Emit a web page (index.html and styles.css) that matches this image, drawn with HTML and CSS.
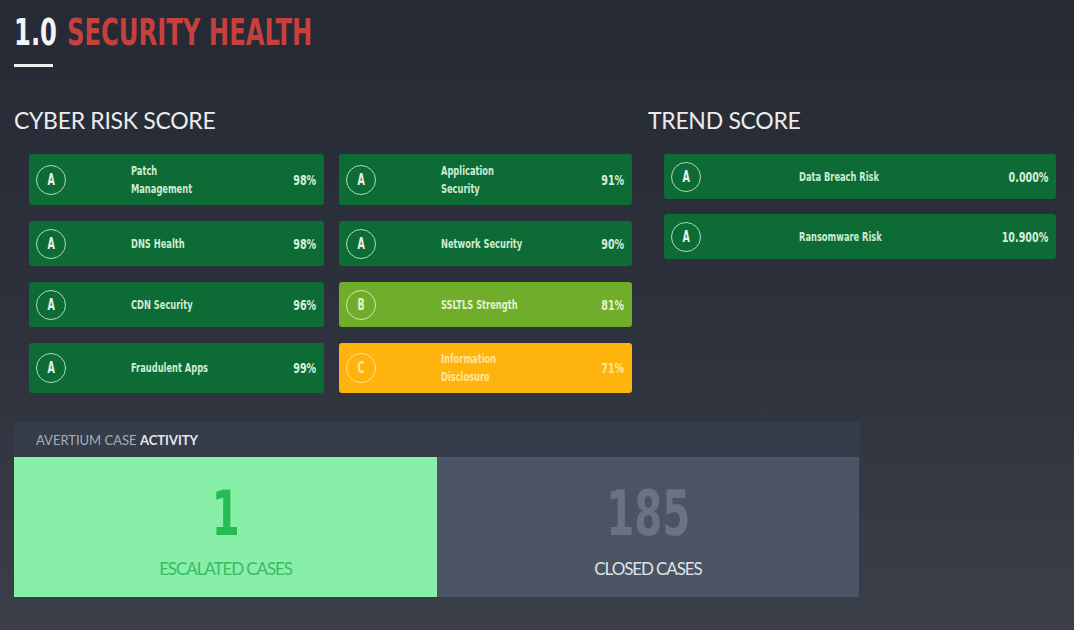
FILE: index.html
```html
<!DOCTYPE html>
<html>
<head>
<meta charset="utf-8">
<link rel="stylesheet" href="styles.css">
</head>
<body>
<div class="page">
  <h1 class="title"><span class="num">1.0</span><span class="name">SECURITY HEALTH</span></h1>
  <div class="rule"></div>

  <div class="scores">
    <section class="cyber">
      <h2 class="section-head">CYBER RISK SCORE</h2>
      <div class="cards two-col">
        <div class="card green tall"><span class="badge"><i>A</i></span><span class="label"><i>Patch<br>Management</i></span><span class="value"><i>98%</i></span></div>
        <div class="card green tall"><span class="badge"><i>A</i></span><span class="label"><i>Application<br>Security</i></span><span class="value"><i>91%</i></span></div>
        <div class="card green"><span class="badge"><i>A</i></span><span class="label"><i>DNS Health</i></span><span class="value"><i>98%</i></span></div>
        <div class="card green"><span class="badge"><i>A</i></span><span class="label"><i>Network Security</i></span><span class="value"><i>90%</i></span></div>
        <div class="card green"><span class="badge"><i>A</i></span><span class="label"><i>CDN Security</i></span><span class="value"><i>96%</i></span></div>
        <div class="card lime"><span class="badge"><i>B</i></span><span class="label"><i>SSLTLS Strength</i></span><span class="value"><i>81%</i></span></div>
        <div class="card green tall"><span class="badge"><i>A</i></span><span class="label"><i>Fraudulent Apps</i></span><span class="value"><i>99%</i></span></div>
        <div class="card amber tall"><span class="badge"><i>C</i></span><span class="label"><i>Information<br>Disclosure</i></span><span class="value"><i>71%</i></span></div>
      </div>
    </section>
    <section class="trend">
      <h2 class="section-head">TREND SCORE</h2>
      <div class="cards one-col">
        <div class="card green"><span class="badge"><i>A</i></span><span class="label"><i>Data Breach Risk</i></span><span class="value"><i>0.000%</i></span></div>
        <div class="card green"><span class="badge"><i>A</i></span><span class="label"><i>Ransomware Risk</i></span><span class="value"><i>10.900%</i></span></div>
      </div>
    </section>
  </div>

  <div class="activity">
    <div class="activity-head"><span class="muted">AVERTIUM CASE</span> <strong>ACTIVITY</strong></div>
    <div class="panels">
      <div class="panel escalated"><div class="big">1</div><div class="caption">ESCALATED CASES</div></div>
      <div class="panel closed"><div class="big">185</div><div class="caption">CLOSED CASES</div></div>
    </div>
  </div>
</div>
</body>
</html>
```

FILE: styles.css
```css
html, body {
  margin: 0;
  padding: 0;
}
body {
  width: 1074px;
  height: 630px;
  overflow: hidden;
  background: linear-gradient(180deg, #252a35 0%, #2d313c 50%, #3b3f49 100%);
  font-family: "Lato", "Liberation Sans", sans-serif;
}
.page {
  padding: 13px 0 0 14px;
}
.title {
  margin: 0;
  font-family: "DejaVu Sans Condensed", "DejaVu Sans", sans-serif;
  font-weight: 700;
  font-size: 38px;
  line-height: 38px;
  height: 38px;
  white-space: nowrap;
  transform: scaleX(0.71);
  transform-origin: left center;
}
.title .num {
  color: #f4f4f4;
  margin-right: 14px;
}
.title .name {
  color: #c6403e;
}
.rule {
  margin-top: 13px;
  width: 39px;
  height: 3px;
  background: #f0f0f0;
}
.scores {
  display: flex;
  gap: 16px;
  margin-top: 41px;
}
.cyber {
  width: 618px;
}
.trend {
  width: 408px;
}
.section-head {
  margin: 0;
  font-family: "Lato", sans-serif;
  font-weight: 400;
  font-size: 23px;
  line-height: 24px;
  color: #ececec;
  letter-spacing: -0.3px;
}
.cards {
  display: grid;
  margin-top: 22px;
}
.two-col {
  grid-template-columns: 295px 293px;
  column-gap: 15px;
  row-gap: 16px;
  padding-left: 15px;
}
.one-col {
  grid-template-columns: 392px;
  row-gap: 15px;
  padding-left: 16px;
}
.card {
  display: grid;
  grid-template-columns: 34% 1fr auto;
  align-items: center;
  height: 45px;
  padding: 0 8px 0 7px;
  border-radius: 3px;
  font-family: "DejaVu Sans Condensed", "DejaVu Sans", sans-serif;
  box-sizing: border-box;
}
.card i {
  font-style: normal;
  display: inline-block;
  white-space: nowrap;
}
.card.tall {
  height: 51px;
}
.two-col .card:nth-child(7),
.two-col .card:nth-child(8) {
  height: 50px;
}
.badge {
  width: 30px;
  height: 30px;
  box-sizing: border-box;
  border: 1.5px solid rgba(205, 235, 210, 0.85);
  border-radius: 50%;
  display: flex;
  align-items: center;
  justify-content: center;
  font-size: 15px;
  font-weight: 700;
  color: #e6f4e8;
}
.badge i {
  transform: scaleX(0.7);
}
.label {
  font-size: 13px;
  line-height: 18px;
  font-weight: 700;
  color: #cdebd3;
}
.label i {
  transform: scaleX(0.71);
  transform-origin: left center;
}
.value {
  font-size: 14px;
  font-weight: 700;
  color: #d9efdc;
  text-align: right;
}
.value i {
  transform: scaleX(0.76);
  transform-origin: right center;
}
.green {
  background: #0d6c35;
}
.lime {
  background: #70ad2b;
}
.lime .label, .lime .value, .lime .badge {
  color: #e3f3cc;
}
.lime .badge {
  border-color: rgba(225, 245, 200, 0.85);
}
.amber {
  background: #ffb30d;
}
.amber .label, .amber .value, .amber .badge {
  color: #ffe6a0;
}
.amber .badge {
  border-color: rgba(255, 232, 165, 0.9);
}
.activity {
  margin-top: 29px;
  width: 846px;
  background: #353c4a;
}
.activity-head {
  height: 35px;
  line-height: 36px;
  padding-left: 22px;
  font-size: 13px;
  letter-spacing: 0;
  color: #e6e8ec;
}
.activity-head .muted {
  color: #a7adb8;
}
.activity-head strong {
  font-weight: 700;
}
.panels {
  display: grid;
  grid-template-columns: 423px 422px;
  height: 140px;
}
.panel {
  display: flex;
  flex-direction: column;
  align-items: center;
  padding-top: 25px;
  box-sizing: border-box;
}
.big {
  font-family: "DejaVu Sans Condensed", "DejaVu Sans", sans-serif;
  font-weight: 700;
  font-size: 63px;
  line-height: 64px;
  transform: scaleX(0.71);
}
.caption {
  margin-top: 13px;
  font-size: 17px;
  line-height: 20px;
  letter-spacing: -1.1px;
}
.escalated {
  background: #87efa7;
}
.escalated .big {
  color: #27bb55;
}
.escalated .caption {
  color: #3cb968;
}
.closed {
  background: #4b5464;
}
.closed .big {
  color: #6a7384;
}
.closed .caption {
  color: #dfe2e7;
}
```
